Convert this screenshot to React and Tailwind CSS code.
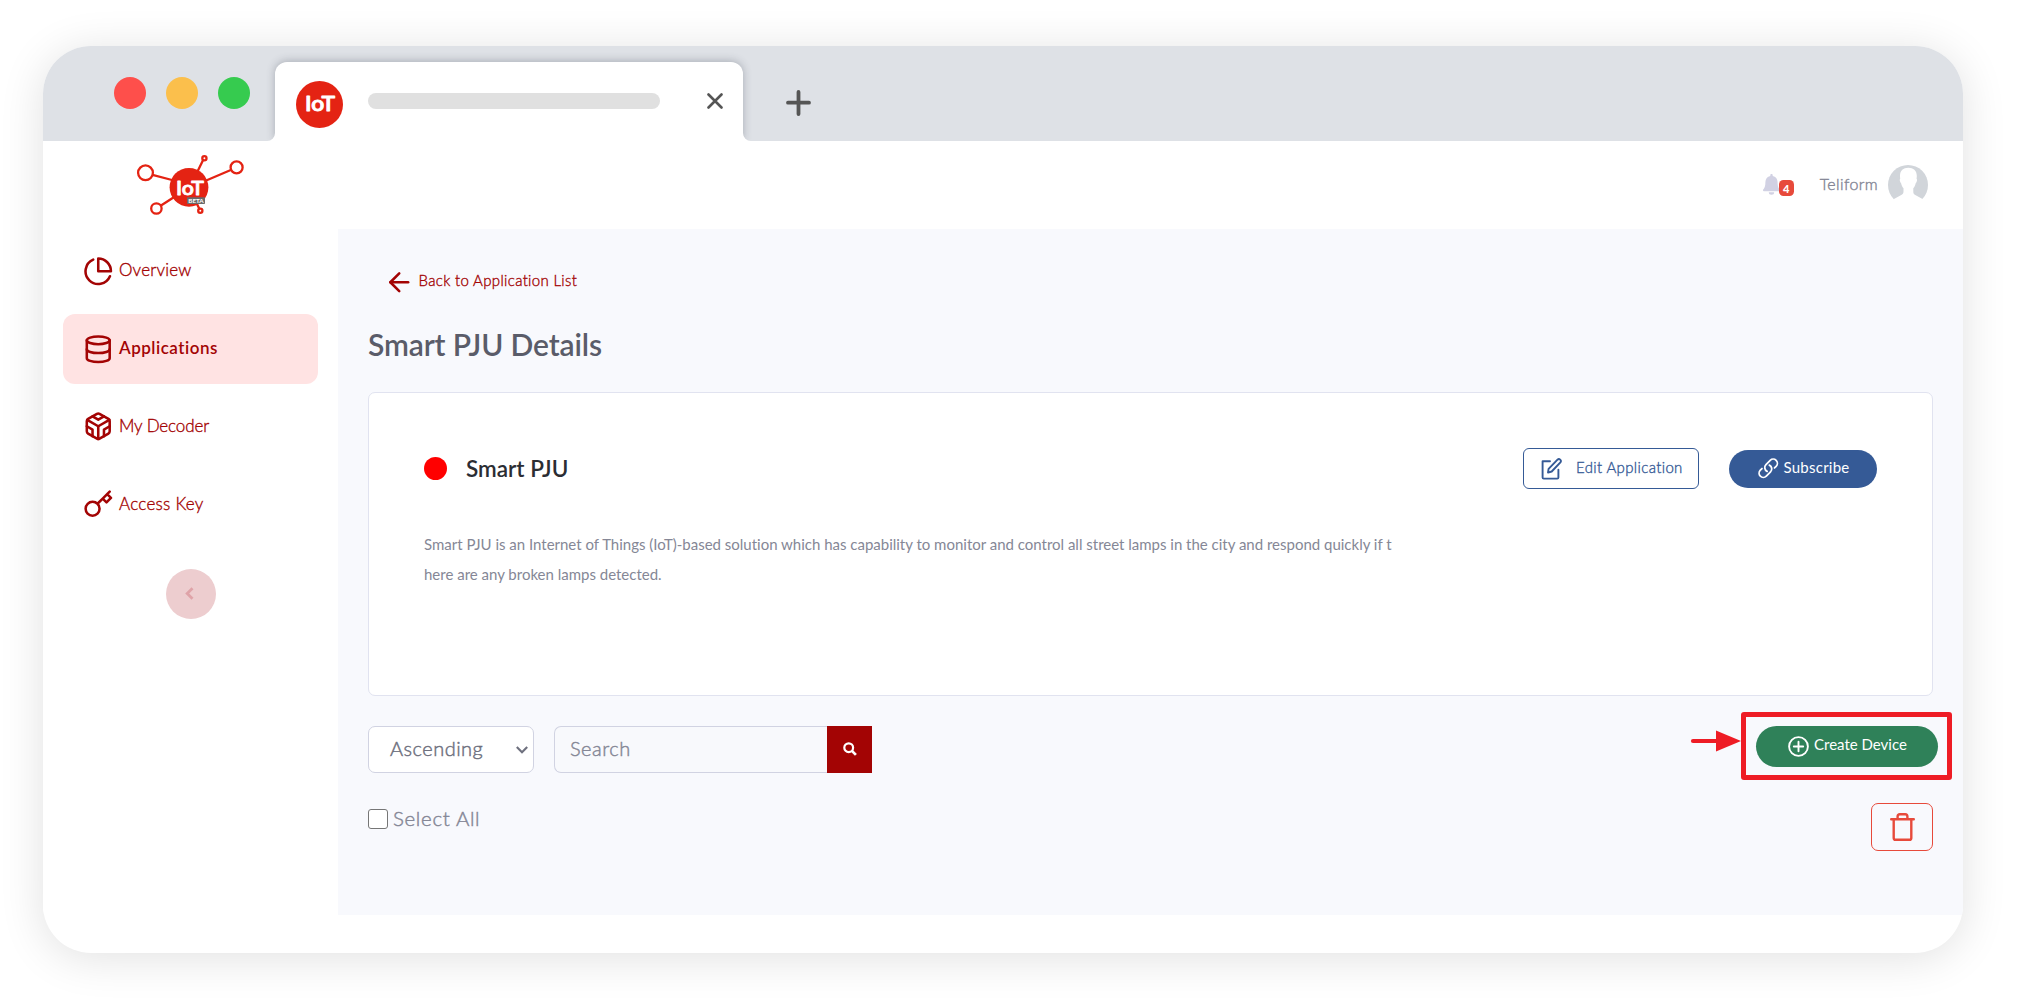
import React from "react";
import { FiPieChart, FiDatabase, FiCodesandbox, FiKey, FiArrowLeft } from "react-icons/fi";

const NAV = [
  { label: "Overview", Icon: FiPieChart, text: "font-light tracking-[0.22px] [-webkit-text-stroke:0.35px]" },
  { label: "Applications", Icon: FiDatabase, text: "font-semibold tracking-[0.5px]", active: true },
  { label: "My Decoder", Icon: FiCodesandbox, text: "font-light tracking-[-0.1px] [-webkit-text-stroke:0.35px]" },
  { label: "Access Key", Icon: FiKey, text: "font-light tracking-[0.27px] [-webkit-text-stroke:0.35px]" },
];

function TabBar() {
  return (
    <div className="flex h-[95px] shrink-0 overflow-hidden bg-[#dee1e6] pl-[71px]">
      <div className="mt-[31px] flex w-[161px] gap-5">
        <span className="size-8 rounded-full bg-[#fe4f4b]" />
        <span className="size-8 rounded-full bg-[#fbbf4c]" />
        <span className="size-8 rounded-full bg-[#36cb4f]" />
      </div>
      <div className="relative mt-4 flex w-[468px] rounded-t-[12px] bg-white pl-[21px] shadow-[0_-1px_9px_rgba(60,64,80,0.32)]">
        <svg className="mt-[19px] shrink-0" width="47" height="47" viewBox="0 0 47 47">
          <circle cx="23.5" cy="23.5" r="23.5" fill="#e42313" />
          <text x="24" y="29.5" textAnchor="middle" textLength="30" lengthAdjust="spacingAndGlyphs" fontFamily="Lato, sans-serif" fontWeight="600" fontSize="21.5" fill="#fff" stroke="#fff" strokeWidth="0.9" strokeLinejoin="round">IoT</text>
        </svg>
        <span className="mt-[31px] ml-[25px] h-4 w-[292px] rounded-full bg-[#e0e0e0]" />
        <svg className="mt-[31px] ml-[47px]" width="16" height="16" viewBox="0 0 16 16" fill="none" stroke="#555" strokeWidth="2.6" strokeLinecap="round">
          <path d="M1.5 1.5l13 13M14.5 1.5l-13 13" />
        </svg>
        <svg className="absolute bottom-0 -left-2" width="8" height="8"><path d="M8 0v8H0a8 8 0 0 0 8-8z" fill="#fff" /></svg>
        <svg className="absolute -right-2 bottom-0" width="8" height="8"><path d="M0 0v8h8a8 8 0 0 1-8-8z" fill="#fff" /></svg>
      </div>
      <svg className="mt-[44px] ml-[43px]" width="25" height="26" viewBox="0 0 25 26" fill="none" stroke="#555" strokeWidth="3.8" strokeLinecap="round">
        <path d="M12.5 2v22M2 12.7h21" />
      </svg>
    </div>
  );
}

function Logo() {
  return (
    <svg width="110" height="64" viewBox="136 153 110 64">
      <g fill="none" stroke="#e42313" strokeWidth="2.3">
        <path d="M152.5 174.8L172 180M230.8 170L205 181M203 160.2L197.500 171.500M161 205.500L175 196.500M197 204l2.200 4.500" />
        <circle cx="145.500" cy="172.800" r="7.400" />
        <circle cx="236.600" cy="167.400" r="6" />
        <circle cx="156.400" cy="208.500" r="5.200" />
        <circle cx="204.400" cy="158.200" r="2.100" />
        <circle cx="200.300" cy="210.700" r="2.100" />
      </g>
      <circle cx="189" cy="187.300" r="19.400" fill="#e42313" />
      <text x="190" y="194.800" textAnchor="middle" textLength="28" lengthAdjust="spacingAndGlyphs" fontFamily="Lato, sans-serif" fontWeight="600" fontSize="20" fill="#fff" stroke="#fff" strokeWidth="0.8" strokeLinejoin="round">IoT</text>
      <rect x="187" y="197.300" width="18" height="6.800" rx="0.8" fill="#6b6b6b" />
      <text x="196" y="202.900" textAnchor="middle" textLength="15.500" lengthAdjust="spacingAndGlyphs" fontFamily="Lato, sans-serif" fontWeight="700" fontSize="6.200" fill="#fff">BETA</text>
    </svg>
  );
}

function Header() {
  return (
    <header className="flex h-[88px] shrink-0 items-start justify-between bg-white pr-[35px] pl-[93px]">
      <div className="mt-3"><Logo /></div>
      <div className="flex h-[88px] items-center">
        <div className="relative h-[22px] w-[31px]">
          <svg width="17" height="21" viewBox="0 0 17 21" fill="#d1d1e3">
            <path d="M8.500 0c.7 0 1.200.5 1.200 1.200v.8c3 .6 4.900 3 4.900 6 0 4.600 1 6.200 2.200 7.600.5.600.200 1.700-.8 1.700H1c-1 0-1.300-1.100-.8-1.700C1.400 14.200 2.400 12.600 2.400 8c0-3 1.900-5.400 4.900-6v-.8C7.300.5 7.800 0 8.500 0zM5.800 18.300h5.400a2.700 2.500 0 0 1-5.400 0z" />
          </svg>
          <span className="absolute top-[6px] left-4 flex h-4 w-[15px] items-center justify-center rounded-[4.500px] bg-[#e74a3b] text-[11px] leading-none font-black text-white">4</span>
        </div>
        <span className="ml-[26px] pb-[3px] text-[16px] font-light tracking-[0.38px] text-[#858796] [-webkit-text-stroke:0.4px]">Teliform</span>
        <svg className="ml-[10px]" width="40" height="40" viewBox="0 0 40 40">
          <circle cx="20" cy="20" r="20" fill="#d1d5da" />
          <path d="M20.300 2.700c5 0 8.500 2.900 8.500 8 0 1.500-.2 2.300-.2 3.300.6.200.5 1.300.2 2.300-.3 1-.6 1.500-1 1.700-.5 2.300-1.300 4-2.500 5.300v3.200c0 1.800.4 2.700 2.400 3.700l7.300 4V40H5.500v-5.800l7.300-4c2-1 2.700-1.900 2.700-3.700v-3.200c-1.200-1.300-2-3-2.500-5.300-.4-.2-.7-.7-1-1.700-.3-1-.4-2.100.2-2.300 0-1-.2-1.800-.2-3.300 0-5.100 3.300-8 8.300-8z" fill="#fff" />
        </svg>
      </div>
    </header>
  );
}

function Sidebar() {
  return (
    <nav className="flex w-[295px] shrink-0 flex-col bg-white px-5 pt-[7px]">
      <div className="flex flex-col gap-[7.800px]">
        {NAV.map(({ label, Icon, text, active }) => (
          <div key={label} className={active ? "flex h-[70px] w-[255px] items-center rounded-[12px] bg-[#ffe3e3] pl-5 text-[#a30404]" : "flex h-[70px] w-[255px] items-center pl-5 text-[#a30404]"}>
            <Icon className="size-[30.500px] shrink-0" />
            <span className={"ml-[5.500px] pb-[2px] text-[17px] " + text}>{label}</span>
          </div>
        ))}
      </div>
      <div className="mt-[29.600px] ml-[103px] flex size-[50px] items-center justify-center rounded-full bg-[#edcdcf]">
        <svg className="mr-[3px]" width="9" height="13" viewBox="0 0 9 13" fill="none" stroke="#dfa3a8" strokeWidth="2.800">
          <path d="M7.500 1.200L2.200 6.500l5.300 5.300" />
        </svg>
      </div>
    </nav>
  );
}

function EditIcon() {
  return (
    <svg width="21" height="22" viewBox="0 0 21 22" fill="none" stroke="#355a96" strokeWidth="1.900" strokeLinejoin="round" strokeLinecap="round">
      <path d="M9 3.200H1.600v16.200c0 .8.400 1.200 1.200 1.200h13.400c.8 0 1.200-.4 1.200-1.200v-7.600" />
      <path d="M7 14.600l.6-3.700 8.900-9.200c1.800-1.700 4.400.7 2.900 2.600l-8.700 9.200z" />
    </svg>
  );
}

function ApplicationCard() {
  return (
    <section className="mt-[26px] h-[304px] rounded-[7px] border border-[#e1e3f0] bg-white px-[55px] pt-[55px]">
      <div className="flex h-[41px] items-center">
        <span className="size-[23px] rounded-full bg-[#ff0000]" />
        <h2 className="ml-[19px] text-[22.500px] font-semibold text-[#2b2d33]">Smart PJU</h2>
        <button className="ml-auto flex h-[41px] w-[176px] items-center rounded-[6px] border border-[#355a96] pl-[17px] text-[15px] font-light tracking-[0.36px] text-[#355a96] [-webkit-text-stroke:0.35px]">
          <EditIcon />
          <span className="ml-[14px] pb-[2px]">Edit Application</span>
        </button>
        <button className="ml-[30px] flex h-[38px] w-[148px] items-center rounded-full bg-[#355a96] pl-[28px] text-[15px] tracking-[0.25px] text-white">
          <svg width="22.500" height="22.500" viewBox="0 0 24 24" fill="none" stroke="currentColor" strokeWidth="1.900" strokeLinecap="round" strokeLinejoin="round">
            <path d="M13.190 8.688a4.500 4.500 0 0 1 1.242 7.244l-4.500 4.500a4.500 4.500 0 0 1-6.364-6.364l1.757-1.757m13.350-.622l1.757-1.757a4.500 4.500 0 0 0-6.364-6.364l-4.500 4.500a4.500 4.500 0 0 0 1.242 7.244" />
          </svg>
          <span className="ml-1 pb-[2px]">Subscribe</span>
        </button>
      </div>
      <p className="mt-10 w-[985px] text-[15px] leading-[30px] tracking-[-0.005px] text-[#858796]">
        Smart PJU is an Internet of Things (IoT)-based solution which has capability to monitor and control all street lamps in the city and respond quickly if t<br />here are any broken lamps detected.
      </p>
    </section>
  );
}

function Toolbar() {
  return (
    <div className="mt-[30px] flex h-[47px] items-start">
      <div className="flex h-[47px] w-[166px] items-center justify-between rounded-[7px] border border-[#d1d3e2] bg-white pr-[5px] pl-[21px]">
        <span className="pb-[3px] text-[20px] font-light tracking-[0.48px] text-[#6e707e] [-webkit-text-stroke:0.45px]">Ascending</span>
        <svg width="12" height="8" viewBox="0 0 12 8" fill="none" stroke="#6e707e" strokeWidth="2.100"><path d="M.8 1l5.200 5.300L11.200 1" /></svg>
      </div>
      <div className="ml-5 flex h-[47px] w-[273px] items-center rounded-l-[7px] border border-r-0 border-[#d1d3e2] bg-[#f8f9fc] pl-[15px]">
        <span className="pb-[3px] text-[20px] font-light tracking-[0.5px] text-[#858796] [-webkit-text-stroke:0.45px]">Search</span>
      </div>
      <button className="flex h-[47px] w-[45px] items-center justify-center bg-[#a30404]">
        <svg className="mb-[2px]" width="14" height="14" viewBox="0 0 14 14" fill="none" stroke="#fff" strokeWidth="2.200"><circle cx="5.700" cy="5.700" r="4.400" /><path d="M8.900 8.900l4 4" strokeWidth="2.700" /></svg>
      </button>
      <div className="relative -mr-[5px] ml-auto">
        <button className="flex h-[41px] w-[182px] items-center rounded-full bg-[#2f8159] pl-8 text-[15px] text-white">
          <svg width="21" height="21" viewBox="0 0 21 21" fill="none" stroke="currentColor" strokeWidth="1.900"><circle cx="10.500" cy="10.500" r="9.400" /><path d="M10.500 5.800v9.400M5.800 10.500h9.400" strokeLinecap="round" /></svg>
          <span className="ml-[5px] pb-[4px]">Create Device</span>
        </button>
        <span className="absolute -top-[14px] -left-[15px] h-[68px] w-[211px] rounded-[3px] border-[5px] border-[#ee1c25]" />
        <svg className="absolute top-1 -left-[66px]" width="52" height="22" viewBox="0 0 52 22" fill="#ee1c25">
          <path d="M3 11h24" stroke="#ee1c25" strokeWidth="4.200" strokeLinecap="round" />
          <path d="M26 0.500L51 11 26 21.500z" />
        </svg>
      </div>
    </div>
  );
}

function SelectionBar() {
  return (
    <div className="mt-[30px] flex h-12 items-start justify-between">
      <div className="mt-[6px] flex items-start">
        <span className="size-5 rounded-[3px] border-[1.500px] border-[#767676] bg-white" />
        <span className="ml-[5px] text-[20.500px] leading-[19px] font-light tracking-[0.65px] text-[#858796] [-webkit-text-stroke:0.45px]">Select All</span>
      </div>
      <button className="flex h-12 w-[62px] items-center justify-center rounded-[7px] border border-[#e74a3b]">
        <svg width="25" height="28" viewBox="0 0 25 28" fill="none" stroke="#e74a3b" strokeWidth="2.400" strokeLinejoin="round" strokeLinecap="round">
          <path d="M1.200 6.300h22.600M3.700 6.500v18.400c0 1.200.6 1.900 1.900 1.900h13.800c1.300 0 1.900-.7 1.900-1.900V6.500M7.600 6V3.600c0-1.400.8-2.300 2.200-2.300h5.400c1.400 0 2.200.9 2.200 2.300V6" />
        </svg>
      </button>
    </div>
  );
}

export default function App() {
  return (
    <div className="flex h-[1007px] w-[2020px] bg-white pt-[46px] pl-[43px] font-['Lato',sans-serif]">
      <div className="flex h-[907px] w-[1920px] flex-col overflow-hidden rounded-[48px] bg-white shadow-[0_5px_45px_rgba(0,0,0,0.12)]">
        <TabBar />
        <Header />
        <div className="flex h-[686px] shrink-0">
          <Sidebar />
          <main className="flex-1 bg-[#f8f9fd] px-[30px] pt-7">
            <div className="flex h-[50px] items-center pl-4 text-[#a30404]">
              <FiArrowLeft className="size-[30.500px]" />
              <span className="ml-1 pb-[4px] text-[15px] font-light tracking-[0.33px] [-webkit-text-stroke:0.35px]">Back to Application List</span>
            </div>
            <h1 className="mt-[15px] text-[30px] leading-[44px] font-semibold tracking-[-0.13px] text-[#5a5c69]">Smart PJU Details</h1>
            <ApplicationCard />
            <Toolbar />
            <SelectionBar />
          </main>
        </div>
      </div>
    </div>
  );
}
